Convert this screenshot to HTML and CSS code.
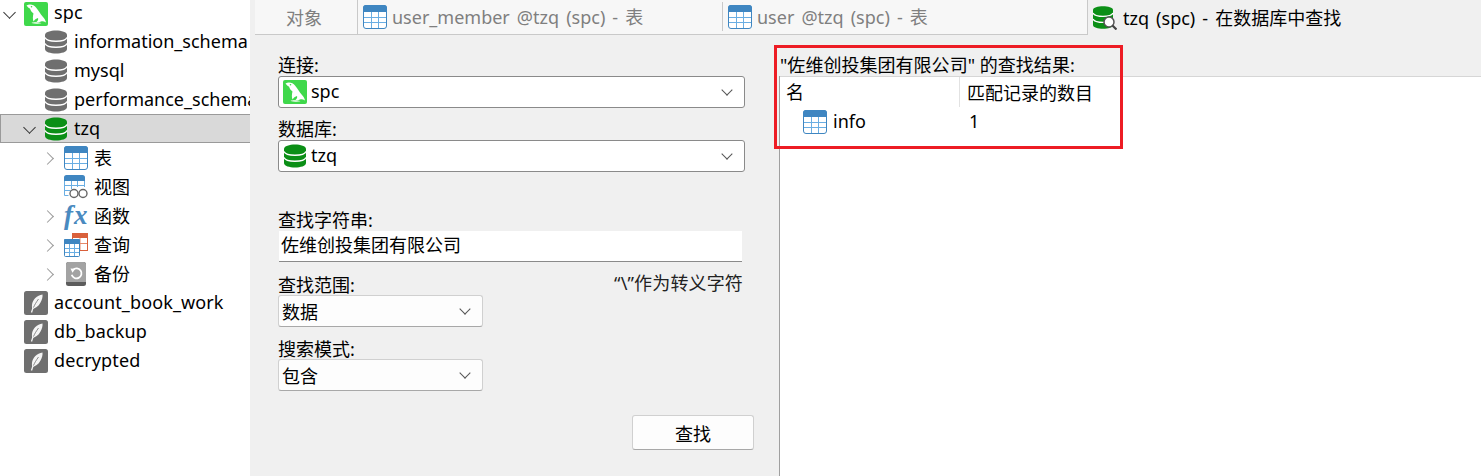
FILE: index.html
```html
<!DOCTYPE html>
<html lang="zh">
<head>
<meta charset="utf-8">
<title>查找</title>
<link rel="stylesheet" href="styles.css">
</head>
<body>
<svg class="defs" width="0" height="0" aria-hidden="true">
  <defs>
    <symbol id="i-table" viewBox="0 0 24 24">
      <rect x="0.5" y="0.5" width="23" height="23" rx="2.5" fill="#fff" stroke="#3f86c1"/>
      <path d="M0 3a3 3 0 0 1 3-3h18a3 3 0 0 1 3 3v4H0z" fill="#3f86c1"/>
      <path d="M1 12.500h22M1 17.500h22M8.500 7v16M15.500 7v16" stroke="#6aaee3" fill="none"/>
    </symbol>
    <symbol id="i-db-gray" viewBox="0 0 24 24">
      <path d="M1 5c0-6 22-6 22 0v14c0 6-22 6-22 0z" fill="#6f6f6f"/>
      <path d="M1 7.500c2 5 20 5 22 0M1 13.500c2 5 20 5 22 0" stroke="#fff" stroke-width="1.400" fill="none"/>
    </symbol>
    <symbol id="i-db-green" viewBox="0 0 24 24">
      <path d="M1 5c0-6 22-6 22 0v14c0 6-22 6-22 0z" fill="#0b8f16"/>
      <path d="M1 7.500c2 5 20 5 22 0M1 13.500c2 5 20 5 22 0" stroke="#fff" stroke-width="1.400" fill="none"/>
    </symbol>
    <symbol id="i-mysql" viewBox="0 0 24 24">
      <rect width="24" height="24" rx="2" fill="#3fd84b"/>
      <path d="M2.500 3.500C6 1.500 10 3 12 5.500C14.500 8.500 16 11.500 19 15C20.500 16.500 21.500 18.500 22 20.500C20 19.300 18.500 19 17 19.500C15.500 20 14 20.500 12.500 19.800C14 18.800 14.500 17.500 14 16C12.500 16.500 11 17 9.500 19.500C8.500 17 8.800 14 9.500 11.500C8 10.500 6.500 8.500 6 6.500C5 6.500 3.500 5 2.500 3.500z" fill="#fff"/>
      <path d="M7.500 21c2-1 7-.8 10 .3-3 .7-7 .7-10-.3z" fill="#fff"/>
      <circle cx="7.500" cy="4.800" r=".8" fill="#3fd84b"/>
    </symbol>
    <symbol id="i-sqlite" viewBox="0 0 24 24">
      <rect width="24" height="24" rx="2.500" fill="#6f6f6f"/>
      <path d="M18.500 3.500C13 4.500 8.500 8.500 8 14C7.800 15.500 8 17 8.500 18C11 17.500 14.500 15.500 16.500 11.500C18 9 18.800 6 18.500 3.500z" fill="#f4f4f4"/>
      <path d="M15 7C11.500 11 9 16 7.500 21.500" stroke="#f4f4f4" stroke-width="1.300" fill="none"/>
      <path d="M14.500 8C12 11.500 10.500 14 9.500 16.500" stroke="#6f6f6f" stroke-width=".8" fill="none"/>
    </symbol>
    <symbol id="i-view" viewBox="0 0 24 24">
      <path d="M0 2.500A2.500 2.500 0 0 1 2.500 0h16A2.500 2.500 0 0 1 21 2.500V6H0z" fill="#3f86c1"/>
      <path d="M.5 6v14.500h4M20.500 6v6M.5 10.500h20M.5 15.500h6M7.500 6v8M13.500 6v6" stroke="#6aaee3" fill="none"/>
      <circle cx="10" cy="18.500" r="4" fill="#fff" stroke="#666" stroke-width="1.400"/>
      <circle cx="19" cy="18.500" r="4" fill="#fff" stroke="#666" stroke-width="1.400"/>
    </symbol>
    <symbol id="i-query" viewBox="0 0 24 24">
      <rect x="8.500" y="0.500" width="15" height="17" fill="#fff" stroke="#d9603b"/>
      <path d="M8 0h16v5H8z" fill="#d9603b"/>
      <path d="M9 10.500h14M16 5v12" stroke="#e58a6c" fill="none"/>
      <rect x="0.500" y="6.500" width="15" height="17" rx="1" fill="#fff" stroke="#3f86c1"/>
      <path d="M0 7a1 1 0 0 1 1-1h14a1 1 0 0 1 1 1v4H0z" fill="#3f86c1"/>
      <path d="M1 15.500h14M1 19.500h14M5.500 11v12M10.500 11v12" stroke="#6aaee3" fill="none"/>
    </symbol>
    <symbol id="i-backup" viewBox="0 0 24 24">
      <rect x="2" width="20" height="24" rx="2.500" fill="#5c5c5c"/>
      <path d="M2 2.500A2.500 2.500 0 0 1 4.500 0h15A2.500 2.500 0 0 1 22 2.500V20H2z" fill="#a3a3a3"/>
      <path d="M9 7.800a5 5 0 1 1-1.300 5" stroke="#fff" stroke-width="1.800" fill="none"/>
      <path d="M6.500 6.500l4.800 .3-2.800 4z" fill="#fff"/>
    </symbol>
    <symbol id="i-db-search" viewBox="0 0 24 24">
      <path d="M0 4c0-5 20-5 20 0v15c0 5-20 5-20 0z" fill="#0b8f16"/>
      <path d="M0 7c2 4.500 18 4.500 20 0M0 13c2 4.500 18 4.500 20 0" stroke="#fff" stroke-width="1.300" fill="none"/>
      <circle cx="16" cy="16" r="5" fill="#fff" stroke="#555" stroke-width="1.500"/>
      <path d="M19.500 19.500l4 4" stroke="#444" stroke-width="2.200"/>
    </symbol>
  </defs>
</svg>

<div class="app">
  <aside class="tree">
    <div class="row row-first lv0"><span class="chev down"></span><svg class="ico"><use href="#i-mysql"/></svg><span class="lbl latin">spc</span></div>
    <div class="row lv1"><span class="chev"></span><svg class="ico"><use href="#i-db-gray"/></svg><span class="lbl latin">information_schema</span></div>
    <div class="row lv1"><span class="chev"></span><svg class="ico"><use href="#i-db-gray"/></svg><span class="lbl latin">mysql</span></div>
    <div class="row lv1"><span class="chev"></span><svg class="ico"><use href="#i-db-gray"/></svg><span class="lbl latin">performance_schema</span></div>
    <div class="row lv1 selected"><span class="chev down"></span><svg class="ico"><use href="#i-db-green"/></svg><span class="lbl latin">tzq</span></div>
    <div class="row lv2"><span class="chev right"></span><svg class="ico"><use href="#i-table"/></svg><span class="lbl">表</span></div>
    <div class="row lv2"><span class="chev"></span><svg class="ico"><use href="#i-view"/></svg><span class="lbl">视图</span></div>
    <div class="row lv2"><span class="chev right"></span><span class="ico fx">fx</span><span class="lbl">函数</span></div>
    <div class="row lv2"><span class="chev right"></span><svg class="ico"><use href="#i-query"/></svg><span class="lbl">查询</span></div>
    <div class="row lv2"><span class="chev right"></span><svg class="ico"><use href="#i-backup"/></svg><span class="lbl">备份</span></div>
    <div class="row lv0"><span class="chev"></span><svg class="ico"><use href="#i-sqlite"/></svg><span class="lbl latin">account_book_work</span></div>
    <div class="row lv0"><span class="chev"></span><svg class="ico"><use href="#i-sqlite"/></svg><span class="lbl latin">db_backup</span></div>
    <div class="row lv0"><span class="chev"></span><svg class="ico"><use href="#i-sqlite"/></svg><span class="lbl latin">decrypted</span></div>
  </aside>

  <main class="main">
    <nav class="tabs">
      <div class="tab tab-obj">对象</div>
      <div class="tab tab-doc tab-sep"><svg class="ico"><use href="#i-table"/></svg><span class="tab-text">user_member @tzq (spc) - 表</span></div>
      <div class="tab tab-doc tab-last"><svg class="ico"><use href="#i-table"/></svg><span class="tab-text">user @tzq (spc) - 表</span></div>
      <div class="tab tab-active"><svg class="ico"><use href="#i-db-search"/></svg><span class="tab-text">tzq (spc) - 在数据库中查找</span></div>
    </nav>

    <div class="content">
      <form class="form">
        <label class="field-label">连接:</label>
        <div class="select select-strong"><svg class="ico"><use href="#i-mysql"/></svg><span class="latin">spc</span><i class="caret"></i></div>

        <label class="field-label gap-db">数据库:</label>
        <div class="select select-strong"><svg class="ico"><use href="#i-db-green"/></svg><span class="latin">tzq</span><i class="caret"></i></div>

        <label class="field-label gap-find">查找字符串:</label>
        <div class="input">佐维创投集团有限公司</div>

        <div class="scope-head">
          <label class="field-label">查找范围:</label>
          <span class="note">“\”作为转义字符</span>
        </div>
        <div class="select select-small"><span>数据</span><i class="caret"></i></div>

        <label class="field-label gap-mode">搜索模式:</label>
        <div class="select select-small"><span>包含</span><i class="caret"></i></div>

        <div class="btn">查找</div>
      </form>

      <section class="results">
        <div class="results-title">"佐维创投集团有限公司" 的查找结果:</div>
        <div class="results-list">
          <div class="thead"><div class="col-name">名</div><div class="col-count">匹配记录的数目</div></div>
          <div class="trow"><div class="col-name cell-name"><svg class="ico"><use href="#i-table"/></svg><span class="latin">info</span></div><div class="col-count cell-count latin">1</div></div>
        </div>
      </section>

      <div class="callout"></div>
    </div>
  </main>
</div>
</body>
</html>
```

FILE: styles.css
```css
* { box-sizing: border-box; }
html, body { margin: 0; height: 100%; overflow: hidden; }
body {
  font-family: "Noto Sans", "Noto Sans CJK SC", sans-serif;
  font-size: 18px;
  color: #000;
  background: #f0f0f0;
}
.defs { position: absolute; }
.app { display: flex; height: 476px; }
.ico { width: 24px; height: 24px; flex: none; display: block; }
.latin { margin-bottom: 2px; }

/* tree */
.tree { width: 250px; flex: none; background: #fff; overflow: hidden; }
.row { display: flex; align-items: center; height: 29px; white-space: nowrap; }
.row-first { height: 27px; }
.row-first .lbl { margin-bottom: 3px; }
.lv0 { padding-left: 0; }
.lv1 { padding-left: 20px; }
.lv2 { padding-left: 40px; }
.lbl { margin-left: 6px; line-height: 1; }
.lv0 .lbl.latin { letter-spacing: 0.12px; }
.chev { width: 24px; flex: none; height: 12px; position: relative; }
.chev::before {
  content: "";
  position: absolute;
  width: 8px; height: 8px;
  border-right: 1.5px solid #333;
  border-bottom: 1.5px solid #333;
}
.chev:not(.down):not(.right)::before { display: none; }
.chev.down::before { left: 5px; top: 0; transform: rotate(45deg); }
.chev.right::before { left: 3px; top: 2px; transform: rotate(-45deg); border-color: #999; }
.selected { background: #d9d9d9; border: 1px solid #9a9a9a; border-right: 0; padding-left: 19px; }
.fx {
  font-family: "Liberation Serif", serif;
  font-style: italic;
  font-weight: bold;
  font-size: 27px;
  line-height: 23px;
  letter-spacing: 1px;
  color: #4a8abf;
  text-align: center;
}

/* tabs */
.main { flex: 1; min-width: 0; display: flex; flex-direction: column; }
.tabs { display: flex; height: 35px; margin-left: 5px; flex: none; }
.tab { display: flex; align-items: center; height: 35px; background: #f7f7f7; color: #7f7f7f; border-bottom: 1px solid #c9c9c9; white-space: nowrap; position: relative; }
.tab-text { word-spacing: 2.4px; margin-bottom: 2px; }
.tab-obj { width: 103px; justify-content: center; border-right: 1px solid #c9c9c9; padding-right: 4px; }
.tab-doc { width: 365px; padding-left: 5px; gap: 5px; }
.tab-sep::after { content: ""; position: absolute; right: 0; top: 2px; height: 29px; width: 1px; background: #c9c9c9; }
.tab-last { border-right: 1px solid #c9c9c9; }
.tab-active { flex: 1; background: #f0f0f0; color: #000; padding-left: 5px; gap: 6px; border-bottom: 0; }

/* form */
.content { flex: 1; display: flex; position: relative; min-height: 0; }
.form { width: 529px; flex: none; padding: 20px 0 0 28px; display: flex; flex-direction: column; align-items: flex-start; }
.field-label { display: block; height: 21px; line-height: 21px; }
.gap-db { margin-top: 11px; height: 21px; }
.gap-find { margin-top: 38px; }
.gap-mode { margin-top: 12px; height: 20px; }
.select { display: flex; align-items: center; position: relative; background: #fff; border-radius: 3px; }
.select-strong { width: 467px; height: 32px; border: 1px solid #8a8a8a; padding-left: 4px; gap: 4px; }
.select-small { width: 205px; height: 32px; border: 1px solid #d0d0d0; border-bottom-color: #a8a8a8; padding-left: 3px; background: #fdfdfd; }
.caret { position: absolute; right: 13px; top: 9px; width: 8px; height: 8px; border-right: 1px solid #555; border-bottom: 1px solid #555; transform: rotate(45deg); }
.input { width: 463px; height: 31px; margin-left: 1px; padding-left: 2px; line-height: 28px; background: #fff; border-bottom: 1px solid #8a8a8a; }
.scope-head { width: 465px; display: flex; justify-content: space-between; margin-top: 13px; height: 20px; line-height: 20px; }
.note { color: #222; letter-spacing: 0.15px; margin-top: -2px; }
.btn { width: 122px; height: 35px; margin: 24px 0 0 354px; display: flex; align-items: center; justify-content: center; background: #fdfdfd; border: 1px solid #d0d0d0; border-bottom-color: #a8a8a8; border-radius: 3px; }

/* results */
.results { flex: 1; min-width: 0; display: flex; flex-direction: column; border-left: 1px solid #a0a0a0; margin-top: 41px; position: relative; }
.results-title { position: absolute; left: 0; top: -21px; height: 20px; line-height: 20px; white-space: nowrap; letter-spacing: 0.03px; }
.results-list { flex: 1; background: #fff; border-top: 1px solid #d6d6d6; }
.thead { display: flex; height: 30px; align-items: center; }
.col-name { width: 180px; padding-left: 6px; flex: none; }
.thead .col-name { height: 30px; line-height: 30px; border-right: 1px solid #e2e2e2; }
.col-count { padding-left: 7px; }
.trow { display: flex; height: 29px; align-items: center; }
.cell-name { display: flex; align-items: center; gap: 6px; padding-left: 23px; }
.cell-count { padding-left: 9px; }
.callout { position: absolute; left: 524px; top: 10px; width: 349px; height: 104px; border: 3px solid #ed1c24; pointer-events: none; }
```
